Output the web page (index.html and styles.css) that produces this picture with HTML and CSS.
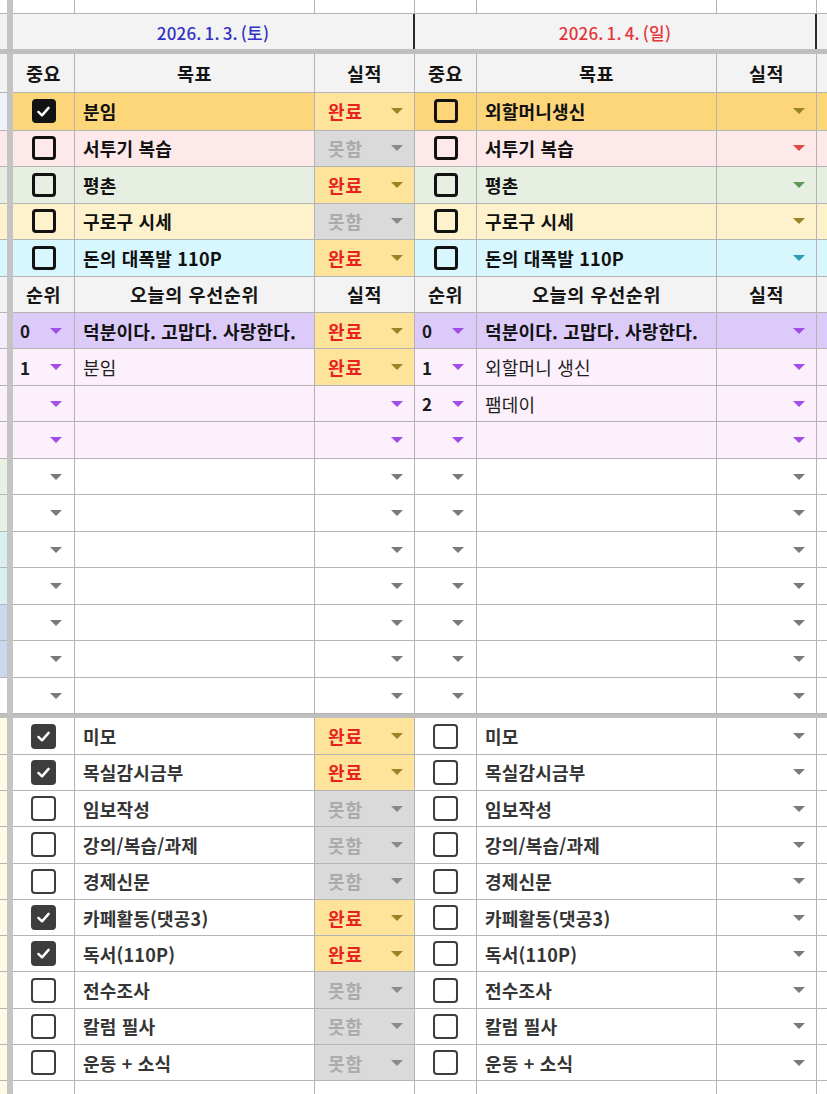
FILE: index.html
```html
<!DOCTYPE html>
<html lang="ko">
<head>
<meta charset="utf-8">
<title>Planner</title>
<link rel="stylesheet" href="styles.css">
</head>
<body>
<div class="sheet">
  <!-- top partial row -->
  <div class="row r0">
    <div class="p w"></div><div class="sep"></div>
    <div></div><div></div><div></div><div></div><div></div><div></div><div class="g"></div>
  </div>
  <!-- date row -->
  <div class="row date">
    <div class="p gy"></div><div class="sep"></div>
    <div class="dcell blue">2026. 1. 3. (토)</div>
    <div class="dcell red">2026. 1. 4. (일)</div>
    <div class="g gy"></div>
  </div>
  <div class="thick"></div>
  <!-- header -->
  <div class="row hd head">
    <div class="p gy"></div><div class="sep"></div>
    <div class="ct">중요</div><div class="ct">목표</div><div class="ct">실적</div>
    <div class="ct">중요</div><div class="ct">목표</div><div class="ct">실적</div>
    <div class="g"></div>
  </div>
  <!-- goals -->
  <div class="row goal g1 y1">
    <div class="p bl"></div><div class="sep"></div>
    <div class="ct"><span class="cb on"><svg viewBox="0 0 16 16"><polyline points="3.2,8.4 6.6,11.6 12.8,4.6"/></svg></span></div>
    <div class="tx bold">분임</div>
    <div class="dc ok"><span class="v">완료</span><span class="dd ol"></span></div>
    <div class="ct"><span class="cb"></span></div>
    <div class="tx bold">외할머니생신</div>
    <div class="dc"><span class="dd ol"></span></div>
    <div class="g"></div>
  </div>
  <div class="row goal pk">
    <div class="p"></div><div class="sep"></div>
    <div class="ct"><span class="cb"></span></div>
    <div class="tx bold">서투기 복습</div>
    <div class="dc no"><span class="v">못함</span><span class="dd gr"></span></div>
    <div class="ct"><span class="cb"></span></div>
    <div class="tx bold">서투기 복습</div>
    <div class="dc"><span class="dd rd"></span></div>
    <div class="g"></div>
  </div>
  <div class="row goal gn">
    <div class="p"></div><div class="sep"></div>
    <div class="ct"><span class="cb"></span></div>
    <div class="tx bold">평촌</div>
    <div class="dc ok"><span class="v">완료</span><span class="dd ol"></span></div>
    <div class="ct"><span class="cb"></span></div>
    <div class="tx bold">평촌</div>
    <div class="dc"><span class="dd gg"></span></div>
    <div class="g"></div>
  </div>
  <div class="row goal yl">
    <div class="p"></div><div class="sep"></div>
    <div class="ct"><span class="cb"></span></div>
    <div class="tx bold">구로구 시세</div>
    <div class="dc no"><span class="v">못함</span><span class="dd gr"></span></div>
    <div class="ct"><span class="cb"></span></div>
    <div class="tx bold">구로구 시세</div>
    <div class="dc"><span class="dd ol"></span></div>
    <div class="g"></div>
  </div>
  <div class="row goal cy">
    <div class="p"></div><div class="sep"></div>
    <div class="ct"><span class="cb"></span></div>
    <div class="tx bold">돈의 대폭발 110P</div>
    <div class="dc ok"><span class="v">완료</span><span class="dd ol"></span></div>
    <div class="ct"><span class="cb"></span></div>
    <div class="tx bold">돈의 대폭발 110P</div>
    <div class="dc"><span class="dd tl"></span></div>
    <div class="g"></div>
  </div>
  <!-- priority header -->
  <div class="row hd2 head">
    <div class="p gy"></div><div class="sep"></div>
    <div class="ct">순위</div><div class="ct">오늘의 우선순위</div><div class="ct">실적</div>
    <div class="ct">순위</div><div class="ct">오늘의 우선순위</div><div class="ct">실적</div>
    <div class="g"></div>
  </div>
  <!-- priorities -->
  <div class="row pr pu">
    <div class="p lv"></div><div class="sep"></div>
    <div class="rk"><span class="n">0</span><span class="dd pp"></span></div>
    <div class="tx bold">덕분이다. 고맙다. 사랑한다.</div>
    <div class="dc ok"><span class="v">완료</span><span class="dd ol"></span></div>
    <div class="rk"><span class="n">0</span><span class="dd pp"></span></div>
    <div class="tx bold">덕분이다. 고맙다. 사랑한다.</div>
    <div class="dc"><span class="dd pp"></span></div>
    <div class="g"></div>
  </div>
  <div class="row pr lp">
    <div class="p"></div><div class="sep"></div>
    <div class="rk"><span class="n">1</span><span class="dd pp"></span></div>
    <div class="tx">분임</div>
    <div class="dc ok"><span class="v">완료</span><span class="dd ol"></span></div>
    <div class="rk"><span class="n">1</span><span class="dd pp"></span></div>
    <div class="tx">외할머니 생신</div>
    <div class="dc"><span class="dd pp"></span></div>
    <div class="g"></div>
  </div>
  <div class="row pr lp">
    <div class="p"></div><div class="sep"></div>
    <div class="rk"><span class="dd pp"></span></div>
    <div class="tx"></div>
    <div class="dc"><span class="dd pp"></span></div>
    <div class="rk"><span class="n">2</span><span class="dd pp"></span></div>
    <div class="tx">팸데이</div>
    <div class="dc"><span class="dd pp"></span></div>
    <div class="g"></div>
  </div>
  <div class="row pr lp">
    <div class="p"></div><div class="sep"></div>
    <div class="rk"><span class="dd pp"></span></div>
    <div class="tx"></div>
    <div class="dc"><span class="dd pp"></span></div>
    <div class="rk"><span class="dd pp"></span></div>
    <div class="tx"></div>
    <div class="dc"><span class="dd pp"></span></div>
    <div class="g"></div>
  </div>
  <!-- empty rows -->
  <div class="row pr">
    <div class="p e1"></div><div class="sep"></div>
    <div class="rk"><span class="dd gy2"></span></div><div class="tx"></div><div class="dc"><span class="dd gy2"></span></div>
    <div class="rk"><span class="dd gy2"></span></div><div class="tx"></div><div class="dc"><span class="dd gy2"></span></div>
    <div class="g"></div>
  </div>
  <div class="row pr">
    <div class="p e1"></div><div class="sep"></div>
    <div class="rk"><span class="dd gy2"></span></div><div class="tx"></div><div class="dc"><span class="dd gy2"></span></div>
    <div class="rk"><span class="dd gy2"></span></div><div class="tx"></div><div class="dc"><span class="dd gy2"></span></div>
    <div class="g"></div>
  </div>
  <div class="row pr">
    <div class="p e2"></div><div class="sep"></div>
    <div class="rk"><span class="dd gy2"></span></div><div class="tx"></div><div class="dc"><span class="dd gy2"></span></div>
    <div class="rk"><span class="dd gy2"></span></div><div class="tx"></div><div class="dc"><span class="dd gy2"></span></div>
    <div class="g"></div>
  </div>
  <div class="row pr">
    <div class="p e2"></div><div class="sep"></div>
    <div class="rk"><span class="dd gy2"></span></div><div class="tx"></div><div class="dc"><span class="dd gy2"></span></div>
    <div class="rk"><span class="dd gy2"></span></div><div class="tx"></div><div class="dc"><span class="dd gy2"></span></div>
    <div class="g"></div>
  </div>
  <div class="row pr">
    <div class="p e3"></div><div class="sep"></div>
    <div class="rk"><span class="dd gy2"></span></div><div class="tx"></div><div class="dc"><span class="dd gy2"></span></div>
    <div class="rk"><span class="dd gy2"></span></div><div class="tx"></div><div class="dc"><span class="dd gy2"></span></div>
    <div class="g"></div>
  </div>
  <div class="row pr">
    <div class="p e3"></div><div class="sep"></div>
    <div class="rk"><span class="dd gy2"></span></div><div class="tx"></div><div class="dc"><span class="dd gy2"></span></div>
    <div class="rk"><span class="dd gy2"></span></div><div class="tx"></div><div class="dc"><span class="dd gy2"></span></div>
    <div class="g"></div>
  </div>
  <div class="row pr">
    <div class="p w"></div><div class="sep"></div>
    <div class="rk"><span class="dd gy2"></span></div><div class="tx"></div><div class="dc"><span class="dd gy2"></span></div>
    <div class="rk"><span class="dd gy2"></span></div><div class="tx"></div><div class="dc"><span class="dd gy2"></span></div>
    <div class="g"></div>
  </div>
  <div class="thick t2"></div>
  <!-- habits -->
  <div class="row hb">
    <div class="p cr"></div><div class="sep"></div>
    <div class="ct"><span class="cb h on"><svg viewBox="0 0 16 16"><polyline points="3.2,8.4 6.6,11.6 12.8,4.6"/></svg></span></div>
    <div class="tx med">미모</div>
    <div class="dc ok"><span class="v">완료</span><span class="dd ol"></span></div>
    <div class="ct"><span class="cb h"></span></div>
    <div class="tx med">미모</div>
    <div class="dc"><span class="dd gy2"></span></div>
    <div class="g"></div>
  </div>
  <div class="row hb">
    <div class="p cr"></div><div class="sep"></div>
    <div class="ct"><span class="cb h on"><svg viewBox="0 0 16 16"><polyline points="3.2,8.4 6.6,11.6 12.8,4.6"/></svg></span></div>
    <div class="tx med">목실감시금부</div>
    <div class="dc ok"><span class="v">완료</span><span class="dd ol"></span></div>
    <div class="ct"><span class="cb h"></span></div>
    <div class="tx med">목실감시금부</div>
    <div class="dc"><span class="dd gy2"></span></div>
    <div class="g"></div>
  </div>
  <div class="row hb">
    <div class="p cr"></div><div class="sep"></div>
    <div class="ct"><span class="cb h"></span></div>
    <div class="tx med">임보작성</div>
    <div class="dc no"><span class="v">못함</span><span class="dd gr"></span></div>
    <div class="ct"><span class="cb h"></span></div>
    <div class="tx med">임보작성</div>
    <div class="dc"><span class="dd gy2"></span></div>
    <div class="g"></div>
  </div>
  <div class="row hb">
    <div class="p cr"></div><div class="sep"></div>
    <div class="ct"><span class="cb h"></span></div>
    <div class="tx med">강의/복습/과제</div>
    <div class="dc no"><span class="v">못함</span><span class="dd gr"></span></div>
    <div class="ct"><span class="cb h"></span></div>
    <div class="tx med">강의/복습/과제</div>
    <div class="dc"><span class="dd gy2"></span></div>
    <div class="g"></div>
  </div>
  <div class="row hb">
    <div class="p cr"></div><div class="sep"></div>
    <div class="ct"><span class="cb h"></span></div>
    <div class="tx med">경제신문</div>
    <div class="dc no"><span class="v">못함</span><span class="dd gr"></span></div>
    <div class="ct"><span class="cb h"></span></div>
    <div class="tx med">경제신문</div>
    <div class="dc"><span class="dd gy2"></span></div>
    <div class="g"></div>
  </div>
  <div class="row hb">
    <div class="p cr"></div><div class="sep"></div>
    <div class="ct"><span class="cb h on"><svg viewBox="0 0 16 16"><polyline points="3.2,8.4 6.6,11.6 12.8,4.6"/></svg></span></div>
    <div class="tx med">카페활동(댓공3)</div>
    <div class="dc ok"><span class="v">완료</span><span class="dd ol"></span></div>
    <div class="ct"><span class="cb h"></span></div>
    <div class="tx med">카페활동(댓공3)</div>
    <div class="dc"><span class="dd gy2"></span></div>
    <div class="g"></div>
  </div>
  <div class="row hb">
    <div class="p cr"></div><div class="sep"></div>
    <div class="ct"><span class="cb h on"><svg viewBox="0 0 16 16"><polyline points="3.2,8.4 6.6,11.6 12.8,4.6"/></svg></span></div>
    <div class="tx med">독서(110P)</div>
    <div class="dc ok"><span class="v">완료</span><span class="dd ol"></span></div>
    <div class="ct"><span class="cb h"></span></div>
    <div class="tx med">독서(110P)</div>
    <div class="dc"><span class="dd gy2"></span></div>
    <div class="g"></div>
  </div>
  <div class="row hb">
    <div class="p cr"></div><div class="sep"></div>
    <div class="ct"><span class="cb h"></span></div>
    <div class="tx med">전수조사</div>
    <div class="dc no"><span class="v">못함</span><span class="dd gr"></span></div>
    <div class="ct"><span class="cb h"></span></div>
    <div class="tx med">전수조사</div>
    <div class="dc"><span class="dd gy2"></span></div>
    <div class="g"></div>
  </div>
  <div class="row hb">
    <div class="p cr"></div><div class="sep"></div>
    <div class="ct"><span class="cb h"></span></div>
    <div class="tx med">칼럼 필사</div>
    <div class="dc no"><span class="v">못함</span><span class="dd gr"></span></div>
    <div class="ct"><span class="cb h"></span></div>
    <div class="tx med">칼럼 필사</div>
    <div class="dc"><span class="dd gy2"></span></div>
    <div class="g"></div>
  </div>
  <div class="row hb">
    <div class="p cr"></div><div class="sep"></div>
    <div class="ct"><span class="cb h"></span></div>
    <div class="tx med">운동 + 소식</div>
    <div class="dc no"><span class="v">못함</span><span class="dd gr"></span></div>
    <div class="ct"><span class="cb h"></span></div>
    <div class="tx med">운동 + 소식</div>
    <div class="dc"><span class="dd gy2"></span></div>
    <div class="g"></div>
  </div>
  <div class="row tail">
    <div class="p cr"></div><div class="sep"></div>
    <div></div><div></div><div></div><div></div><div></div><div></div><div class="g"></div>
  </div>
</div>
</body>
</html>
```

FILE: styles.css
```css
html, body {
  margin: 0;
  padding: 0;
  overflow: hidden;
  background: #ffffff;
}
body {
  font-family: "Noto Sans CJK KR", "Noto Sans", sans-serif;
  color: #111;
}
.sheet {
  width: 827px;
  height: 1094px;
  display: flex;
  flex-direction: column;
  overflow: hidden;
}
.row {
  display: grid;
  grid-template-columns: 7px 6px 62px 240px 100px 62px 240px 100px 10px;
  flex: none;
}
.row > div {
  box-sizing: border-box;
  border-right: 1px solid #b4b4b4;
  border-bottom: 1px solid #b4b4b4;
  display: flex;
  align-items: center;
  min-width: 0;
  overflow: hidden;
  white-space: nowrap;
}
.row > .sep {
  background: #c4c4c4;
  border: none;
}
.row > .p { border-right: none; }
.row > .g { border-right: none; }

.r0 { height: 14px; }
.date { height: 35px; }
.hd { height: 39px; }
.goal { height: 36.6px; }
.goal.g1 { height: 37.5px; }
.hd2 { height: 36px; }
.pr { height: 36.5px; }
.hb { height: 36.3px; }
.tail { height: 20px; }

.thick {
  height: 5px;
  background: #bfbfbf;
  flex: none;
}
.thick.t2 { height: 4px; }

/* date */
.date > .dcell {
  justify-content: center;
  background: #f3f3f3;
  border-right: 2px solid #2a2a2a;
  border-bottom: none;
  font-size: 17px;
  font-weight: 500;
  letter-spacing: 0.2px;
  word-spacing: -2px;
  padding-top: 1px;
}
.date > .dcell:nth-child(3) { grid-column: 3 / 6; }
.date > .dcell:nth-child(4) { grid-column: 6 / 9; }
.date > div { border-bottom: none; }
.blue { color: #3232c4; }
.red { color: #e4363c; }

/* headers */
.head > div { background: #f3f3f3; }
.head > .sep { background: #c4c4c4; }
.ct { justify-content: center; }
.head .ct {
  font-size: 18.5px;
  font-weight: 700;
  color: #151515;
  letter-spacing: 0.6px;
}

/* row colours */
.y1 > div { background: #fcd679; }
.pk > div { background: #fde9ea; }
.gn > div { background: #e6efe1; }
.yl > div { background: #fef2cd; }
.cy > div { background: #d8f6fd; }
.pu > div { background: #dccaf9; }
.lp > div { background: #fbf0fb; }
.row > .sep { background: #c4c4c4; }

/* partial left column */
.row > .p.w { background: #ffffff; }
.row > .p.gy { background: #f3f3f3; }
.row > .p.bl { background: #eef2f9; }
.row > .p.lv { background: #f3eefb; }
.row > .p.e1 { background: #e9f1e3; }
.row > .p.e2 { background: #d9eff4; }
.row > .p.e3 { background: #cbd7ee; }
.row > .p.cr { background: #fffae6; }
.row > .g.gy { background: #f3f3f3; }

/* text cells */
.tx {
  padding-left: 8px;
  font-size: 18px;
  font-weight: 400;
  color: #1e1e1e;
  letter-spacing: 0.2px;
}
.tx.bold { font-weight: 700; color: #111; }
.tx.med { font-weight: 700; color: #353535; }

/* dropdown cells */
.dc {
  justify-content: flex-end;
  padding: 0 11px 0 13px;
}
.dc .v {
  margin-right: auto;
  font-size: 18px;
  font-weight: 700;
  letter-spacing: 1px;
}
.row > .dc.ok { background: #fee39b; }
.row > .dc.ok .v { color: #e8231e; }
.row > .dc.no { background: #dadada; }
.row > .dc.no .v { color: #ababab; }

.rk {
  justify-content: flex-end;
  padding: 0 12px 0 7px;
}
.rk .n {
  margin-right: auto;
  font-size: 17px;
  font-weight: 700;
  color: #1a1a1a;
}

/* dropdown arrow */
.dd {
  width: 0;
  height: 0;
  border-left: 6px solid transparent;
  border-right: 6px solid transparent;
  border-top: 6px solid #7d7d7d;
  flex: none;
}
.dd.ol { border-top-color: #9a8425; }
.dd.gr { border-top-color: #8a8a8a; }
.dd.gy2 { border-top-color: #7a7a7a; }
.dd.rd { border-top-color: #e04848; }
.dd.gg { border-top-color: #5d9a5a; }
.dd.tl { border-top-color: #2f9bb0; }
.dd.pp { border-top-color: #a04ee6; }

/* checkboxes */
.cb {
  box-sizing: border-box;
  width: 24px;
  height: 24px;
  border: 3px solid #121212;
  border-radius: 4px;
  display: flex;
  align-items: center;
  justify-content: center;
}
.cb.on { background: #121212; }
.cb.h { border-color: #3d3d3d; border-width: 2.6px; width: 25px; height: 25px; }
.cb.h.on { background: #3d3d3d; }
.cb svg {
  width: 17px;
  height: 17px;
}
.cb svg polyline {
  fill: none;
  stroke: #ffffff;
  stroke-width: 2.3;
  stroke-linecap: round;
  stroke-linejoin: round;
}
```
